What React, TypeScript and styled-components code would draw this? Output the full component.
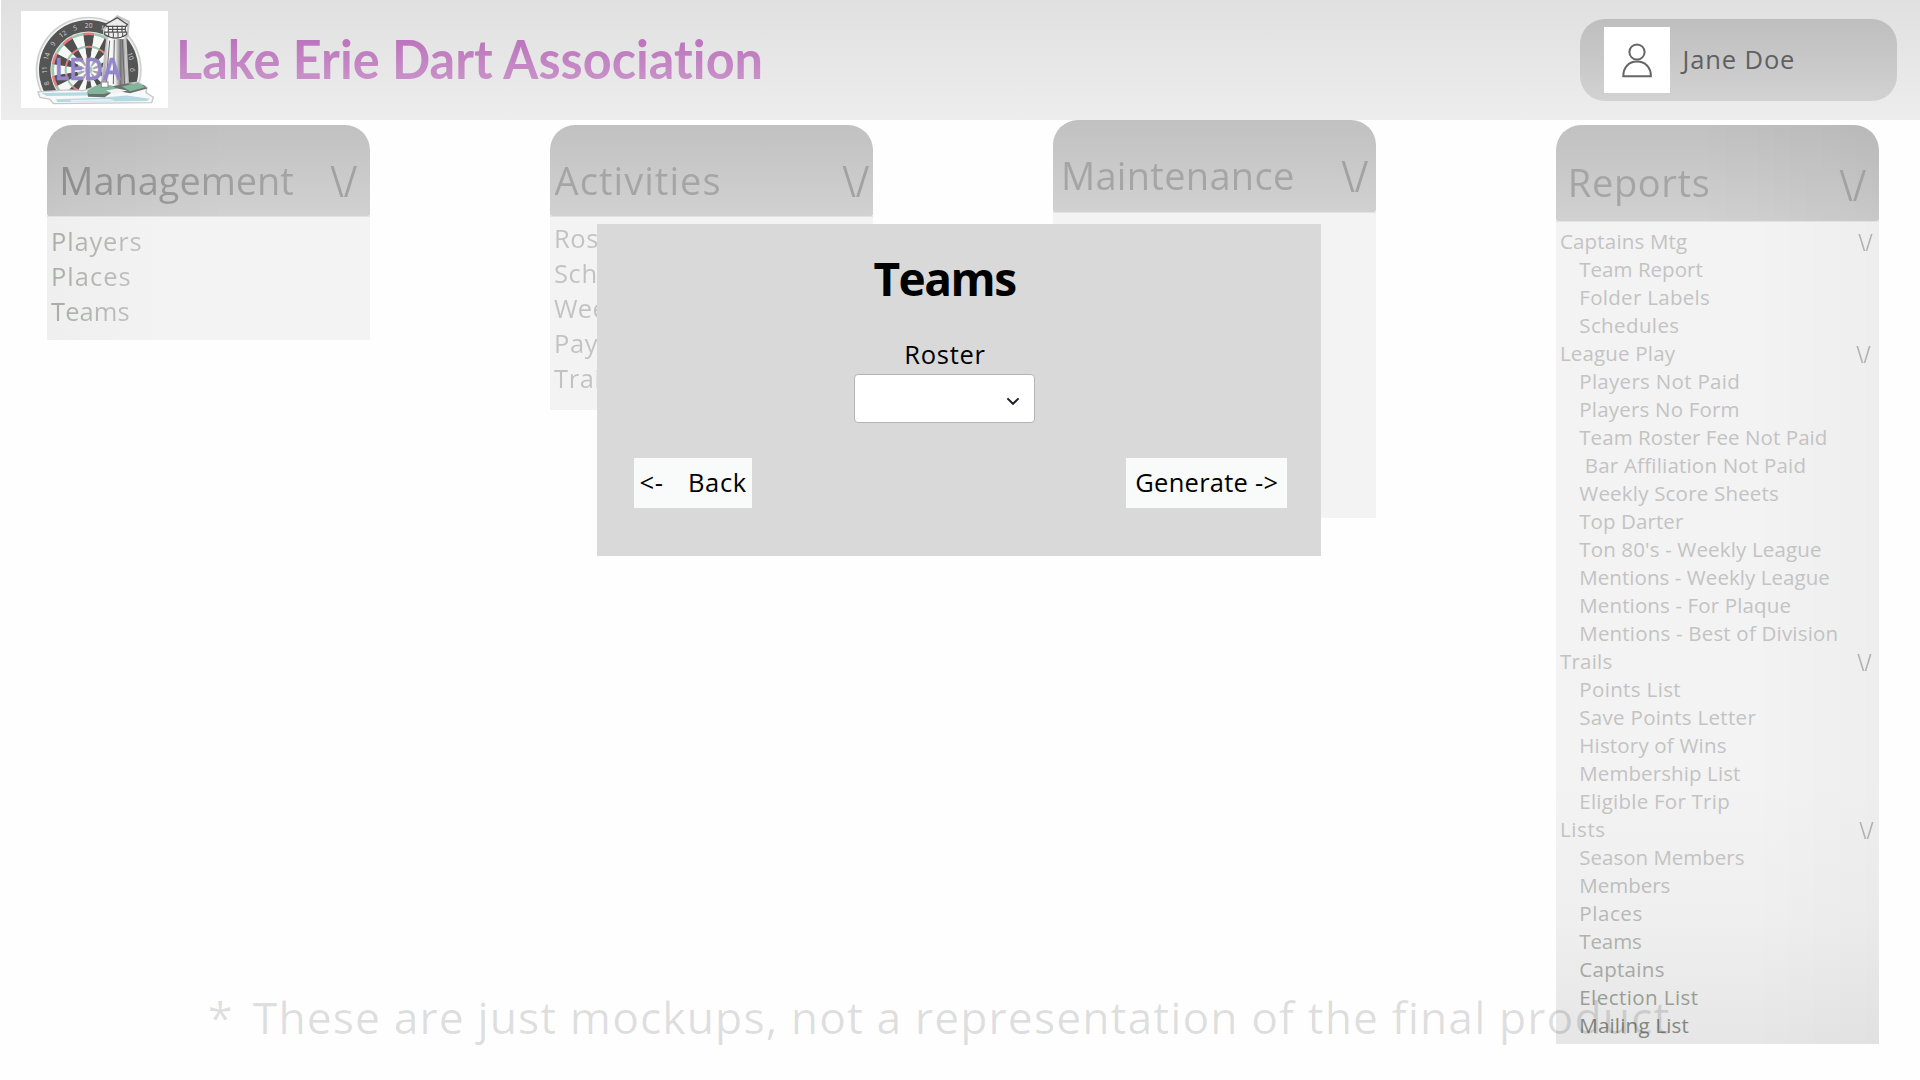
import React from "react";
import styled, { createGlobalStyle } from "styled-components";

const Global = createGlobalStyle`
  *, *::before, *::after { box-sizing: border-box; }
  body {
    margin: 0;
    background: #fff;
    font-family: "Open Sans", "Noto Sans", sans-serif;
    font-variant-ligatures: none;
  }
`;

const Page = styled.div`
  position: relative;
  width: 1920px;
  height: 1080px;
  overflow: hidden;
  background: #fefefe;
`;

const TopBar = styled.header`
  display: flex;
  align-items: flex-start;
  height: 120px;
  margin-left: 1px;
  padding: 11px 23px 0 20px;
  background: linear-gradient(#e0e0e0, #ededed);
`;

const LogoSvg = styled.svg`
  display: block;
  width: 147px;
  height: 97px;
  flex: none;
`;

const Brand = styled.h1`
  margin: 0 auto 0 7.6px;
  padding-top: 14px;
  font: 700 54px/68px Lato, sans-serif;
  font-variant-ligatures: none;
  white-space: nowrap;
  background: linear-gradient(#bc74bc 35%, #c890c8 82%);
  background-clip: text;
  color: transparent;
  transform: scaleX(0.934);
  transform-origin: left;
`;

const UserPill = styled.div`
  display: flex;
  align-items: center;
  gap: 12.5px;
  flex: none;
  width: 317px;
  height: 82px;
  margin-top: 8px;
  padding-left: 24px;
  border-radius: 25px;
  background: linear-gradient(#bebebe, #d2d2d2);
`;

const Avatar = styled.div`
  width: 66px;
  height: 66px;
  background: #fff;
`;

const UserName = styled.span`
  padding-bottom: 3px;
  color: #606060;
  font-size: 25.5px;
  letter-spacing: 0.88px;
`;

const Columns = styled.main`
  display: grid;
  grid-template-columns: repeat(4, 323.4px);
  column-gap: 179.6px;
  align-items: start;
  padding-left: 47px;
`;

const Panel = styled.section<{ $top?: number }>`
  margin-top: ${(p) => p.$top ?? 5}px;
`;

const PanelHead = styled.div<{ $h?: number; $l: number; $r: number; $edge?: "left" | "right" }>`
  display: flex;
  justify-content: space-between;
  height: ${(p) => p.$h ?? 91}px;
  padding: 0 ${(p) => p.$r}px 0 ${(p) => p.$l}px;
  border-radius: 25px 25px 2px 2px;
  white-space: nowrap;
  background: ${(p) =>
      p.$edge ? `linear-gradient(to ${p.$edge}, transparent 45%, rgba(0, 0, 0, 0.045)),` : ""}
    linear-gradient(#c1c1c1, #d1d1d1);
`;

const HeadTitle = styled.h2<{ $ls: number; $lh: number; $from?: string }>`
  margin: 0;
  font-size: 38px;
  font-weight: 400;
  line-height: ${(p) => p.$lh}px;
  letter-spacing: ${(p) => p.$ls}px;
  background: linear-gradient(to right, ${(p) => p.$from ?? "#a5a5a5"}, #a5a5a5);
  background-clip: text;
  color: transparent;
`;

const HeadMark = styled.span<{ $lh: number }>`
  font-size: 44px;
  line-height: ${(p) => p.$lh}px;
  color: #a2a2a2;
  transform: scaleX(0.84);
  transform-origin: right;
`;

const PanelBody = styled.div<{ $h: number; $pad: number; $edge?: boolean; $deep?: boolean }>`
  height: ${(p) => p.$h}px;
  padding: ${(p) => p.$pad}px 0 0 4px;
  border-top: 1px solid #e2e2e2;
  background: ${(p) =>
    p.$deep
      ? "linear-gradient(to right, transparent 60%, rgba(0,0,0,.018)), linear-gradient(#f3f3f3 68%, #efefef 85%, #e6e6e6)"
      : p.$edge
        ? "linear-gradient(to right, #efefef, #f3f3f3 35%)"
        : "#f3f3f3"};
`;

const Item = styled.div<{ $ls?: number; $faded?: boolean }>`
  width: max-content;
  height: 35px;
  line-height: 35px;
  font-size: 25.5px;
  letter-spacing: ${(p) => p.$ls ?? 0.6}px;
  background: ${(p) => (p.$faded ? "#c2c2c2" : "linear-gradient(to right, #a9ada6, #c0c0c0)")};
  background-clip: text;
  color: transparent;
`;

const Row = styled.div<{ $indent: boolean; $c: string; $ls: number; $r: number }>`
  display: flex;
  justify-content: space-between;
  height: 28px;
  padding-left: ${(p) => (p.$indent ? 19.3 : 0)}px;
  padding-right: ${(p) => p.$r}px;
  font-size: 20.5px;
  line-height: 28px;
  letter-spacing: ${(p) => p.$ls}px;
  white-space: pre;
  color: ${(p) => p.$c};
`;

const RowMark = styled.span`
  font-size: 24px;
  line-height: 29px;
  letter-spacing: 0;
  color: #b0b0b0;
  transform: scaleX(0.82);
  transform-origin: right;
`;

const Modal = styled.div`
  position: absolute;
  left: 597px;
  top: 224px;
  width: 724px;
  height: 332px;
  background: #d9d9d9;
  color: #000;
`;

const Form = styled.div`
  display: flex;
  flex-direction: column;
  align-items: center;
  width: 695px;
`;

const ModalTitle = styled.h2`
  margin: 0;
  font-size: 46px;
  line-height: 109px;
  letter-spacing: -1.5px;
`;

const Label = styled.label`
  margin: 4px 0 2px;
  padding-left: 1px;
  font-size: 25.5px;
  line-height: 35px;
  letter-spacing: 0.7px;
`;

const Select = styled.button`
  display: flex;
  justify-content: flex-end;
  align-items: center;
  width: 181px;
  height: 49px;
  padding: 6px 14px 0 0;
  border: 1px solid #b4b4b4;
  border-radius: 4px;
  background: #fff;
`;

const Actions = styled.div`
  display: flex;
  justify-content: space-between;
  margin-top: 35px;
  padding: 0 34px 0 37px;
`;

const ActionButton = styled.button<{ $w: number; $l: number; $ls: number }>`
  display: flex;
  width: ${(p) => p.$w}px;
  height: 50px;
  padding: 0 0 0 ${(p) => p.$l}px;
  border: 0;
  background: #f9fbfa;
  color: #000;
  font: 400 25.5px/48px "Open Sans", sans-serif;
  letter-spacing: ${(p) => p.$ls}px;
  white-space: nowrap;
`;

const Arrow = styled.span`
  width: 48.5px;
  text-align: left;
`;

const Note = styled.p`
  position: absolute;
  left: 208px;
  top: 986px;
  margin: 0;
  font-size: 44.5px;
  line-height: 61px;
  letter-spacing: 1.06px;
  white-space: pre;
  color: rgba(0, 0, 0, 0.13);
`;

const Star = styled.span`
  margin-right: -6px;
`;

const CX = 266;
const CY = 210;

function wedge(i: number, r0: number, r1: number) {
  const a0 = ((i * 18 - 9) * Math.PI) / 180;
  const a1 = ((i * 18 + 9) * Math.PI) / 180;
  const p = (r: number, a: number) => `${(CX + r * Math.sin(a)).toFixed(1)} ${(CY - r * Math.cos(a)).toFixed(1)}`;
  return `M${p(r0, a0)}L${p(r1, a0)}A${r1} ${r1} 0 0 1 ${p(r1, a1)}L${p(r0, a1)}A${r0} ${r0} 0 0 0 ${p(r0, a0)}Z`;
}

const numbers: [string, number][] = [
  ["8", -108], ["11", -90], ["14", -72], ["9", -54], ["12", -36], ["5", -18], ["20", 0], ["1", 18], ["10", 72], ["6", 90],
];

function Logo() {
  const sectors = Array.from({ length: 20 }, (_, i) => i);
  return (
    <LogoSvg viewBox="63 34 441 290" preserveAspectRatio="none">
      <defs>
        <clipPath id="board">
          <rect x="63" y="34" width="441" height="239" />
        </clipPath>
        <linearGradient id="tower">
          <stop offset="0" stopColor="#888" />
          <stop offset=".3" stopColor="#fff" />
          <stop offset=".55" stopColor="#e8e8e8" />
          <stop offset=".75" stopColor="#777" />
          <stop offset="1" stopColor="#ccc" />
        </linearGradient>
      </defs>
      <rect x="63" y="34" width="441" height="290" fill="#fff" />
      <g clipPath="url(#board)">
        <circle cx={CX} cy={CY} r="159" fill="#cfcfcf" />
        <circle cx={CX} cy={CY} r="154" fill="#f4f4f4" />
        <circle cx={CX} cy={CY} r="149" fill="#555" />
        <circle cx={CX} cy={CY} r="115" fill="#e4e4e4" />
        {sectors.map((i) => (
          <g key={i}>
            <path d={wedge(i, 34, 107)} fill={i % 2 ? "#f6f8f6" : "#505050"} />
            <path d={wedge(i, 14, 34)} fill={i % 2 ? "#fafafa" : "#a8a8a8"} />
            <path d={wedge(i, 104, 112)} fill={i % 2 ? "#9cc8af" : "#e47c7e"} />
            <path d={wedge(i, 66, 72)} fill={i % 2 ? "#9cc8af" : "#e47c7e"} />
          </g>
        ))}
        <circle cx={CX} cy={CY} r="11" fill="#a9cbb8" />
        {numbers.map(([n, a]) => (
          <text
            key={n}
            x={CX}
            y={CY - 125}
            transform={`rotate(${a} ${CX} ${CY})`}
            textAnchor="middle"
            fontSize="20"
            fontFamily="Open Sans"
            fill="#d4d4d4"
          >
            {n}
          </text>
        ))}
      </g>
      <path d="M114 276L206 270L250 272L300 256L330 258L414 247L441 262L438 278L460 292L455 308L160 311L150 298L120 292Z" fill="#f6f8f9" stroke="#c8c8c8" strokeWidth="4" />
      <path d="M124 279L262 277L264 287L140 288Z" fill="#b4d9e2" />
      <path d="M168 298L300 293L380 287L450 296L440 303L172 306Z" fill="#b4d9e2" />
      <path d="M210 300L330 297L345 302L215 305Z" fill="#e2f1f4" />
      <path d="M312 88L352 50L386 66L382 108L376 116L384 262L304 262L322 116L313 106Z" fill="#fafafa" stroke="#c4c4c4" strokeWidth="7" />
      <path d="M322 118H373L380 256H306Z" fill="url(#tower)" />
      <path d="M329 122L318 254M343 120L340 252M367 120L374 254" stroke="#666" strokeWidth="3" fill="none" />
      <path d="M316 74L352 54L382 74L378 80H320Z" fill="#ececec" stroke="#505050" strokeWidth="4" />
      <path d="M325 80V100M338 78V100M352 78V100M366 78V100M376 80V100M325 89H376" stroke="#505050" strokeWidth="3.5" />
      <path d="M314 97H380V104Q347 126 314 104Z" fill="#eee" stroke="#505050" strokeWidth="3.5" />
      <path d="M326 98V112M340 98V115M354 98V115M368 98V112" stroke="#505050" strokeWidth="3" />
      <path d="M262 276L298 254L340 258L384 250L432 256L442 266L390 280L344 272L314 292L264 290Z" fill="#6b706e" />
      <path d="M262 272L298 252L338 258L356 270L312 282L266 282Z" fill="#82b59a" />
      <path d="M366 260L414 248L436 262L390 274Z" fill="#82b59a" />
      <path d="M318 272L352 266L382 272L340 282Z" fill="#eef3f0" />
      <path d="M304 246H324V262H304Z" fill="#fff" stroke="#888" strokeWidth="3" />
      <text
        x="164"
        y="240"
        fontFamily="Open Sans"
        fontWeight="600"
        fontSize="90"
        textLength="198"
        lengthAdjust="spacingAndGlyphs"
        fill="#9486cb"
        stroke="#9486cb"
        strokeWidth="2"
      >
        LEDA
      </text>
    </LogoSvg>
  );
}

type Entry = { t: string; ls: number; head?: number; c?: string };

const reports: Entry[] = [
  { t: "Captains Mtg", ls: 0.18, head: 6.5 },
  { t: "Team Report", ls: 0.03 },
  { t: "Folder Labels", ls: 0.3 },
  { t: "Schedules", ls: 0.39 },
  { t: "League Play", ls: 0.17, head: 9 },
  { t: "Players Not Paid", ls: 0.3 },
  { t: "Players No Form", ls: 0.2 },
  { t: "Team Roster Fee Not Paid", ls: 0.07 },
  { t: " Bar Affiliation Not Paid", ls: 0.2 },
  { t: "Weekly Score Sheets", ls: 0.2 },
  { t: "Top Darter", ls: 0.08 },
  { t: "Ton 80's - Weekly League", ls: 0.15 },
  { t: "Mentions - Weekly League", ls: 0.06 },
  { t: "Mentions - For Plaque", ls: 0.13 },
  { t: "Mentions - Best of Division", ls: 0.19 },
  { t: "Trails", ls: 0.22, head: 8 },
  { t: "Points List", ls: 0.36 },
  { t: "Save Points Letter", ls: 0.31 },
  { t: "History of Wins", ls: 0.18 },
  { t: "Membership List", ls: 0.1 },
  { t: "Eligible For Trip", ls: 0.24 },
  { t: "Lists", ls: 0.6, head: 6 },
  { t: "Season Members", ls: 0 },
  { t: "Members", ls: 0, c: "#bebfbe" },
  { t: "Places", ls: 0.6, c: "#b8b9b7" },
  { t: "Teams", ls: -0.1, c: "#b0b2ae" },
  { t: "Captains", ls: 0.3, c: "#a6a9a4" },
  { t: "Election List", ls: 0.44, c: "#999d95" },
  { t: "Mailing List", ls: 0.2, c: "#838780" },
];

export default function App() {
  return (
    <Page>
      <Global />
      <TopBar>
        <Logo />
        <Brand>Lake Erie Dart Association</Brand>
        <UserPill>
          <Avatar>
            <svg width="66" height="66" viewBox="0 0 66 66" fill="none" stroke="#666" strokeWidth="2">
              <circle cx="33" cy="25" r="7.6" />
              <path d="M19.3 49.2C19.3 40 25 34.6 33 34.6S46.9 40 46.9 49.2Z" />
            </svg>
          </Avatar>
          <UserName>Jane Doe</UserName>
        </UserPill>
      </TopBar>
      <Columns>
        <Panel>
          <PanelHead $l={12.3} $r={13} $edge="left">
            <HeadTitle $ls={-0.05} $lh={110} $from="#8e8e8e">Management</HeadTitle>
            <HeadMark $lh={111}>\/</HeadMark>
          </PanelHead>
          <PanelBody $h={124} $pad={7} $edge>
            <Item $ls={0.85}>Players</Item>
            <Item $ls={1}>Places</Item>
            <Item $ls={0.1}>Teams</Item>
          </PanelBody>
        </Panel>
        <Panel>
          <PanelHead $l={4.6} $r={4.6}>
            <HeadTitle $ls={1.05} $lh={110}>Activities</HeadTitle>
            <HeadMark $lh={111}>\/</HeadMark>
          </PanelHead>
          <PanelBody $h={194} $pad={4}>
            <Item $faded>Rosters</Item>
            <Item $faded>Schedules</Item>
            <Item $faded $ls={0.3}>Weekly</Item>
            <Item $faded>Payments</Item>
            <Item $faded>Trails</Item>
          </PanelBody>
        </Panel>
        <Panel $top={0}>
          <PanelHead $h={92} $l={8} $r={8}>
            <HeadTitle $ls={0.3} $lh={110}>Maintenance</HeadTitle>
            <HeadMark $lh={111}>\/</HeadMark>
          </PanelHead>
          <PanelBody $h={306} $pad={0} />
        </Panel>
        <Panel>
          <PanelHead $h={96} $l={11.9} $r={13} $edge="right">
            <HeadTitle $ls={0.65} $lh={115}>Reports</HeadTitle>
            <HeadMark $lh={118}>\/</HeadMark>
          </PanelHead>
          <PanelBody $h={823} $pad={5.4} $deep>
            {reports.map((r) => (
              <Row key={r.t} $indent={!r.head} $c={r.c ?? "#c3c3c3"} $ls={r.ls} $r={r.head ?? 0}>
                {r.t}
                {r.head && <RowMark>\/</RowMark>}
              </Row>
            ))}
          </PanelBody>
        </Panel>
      </Columns>
      <Modal>
        <Form>
          <ModalTitle>Teams</ModalTitle>
          <Label>Roster</Label>
          <Select aria-label="Roster">
            <svg width="14" height="9" viewBox="0 0 14 9" fill="none" stroke="#1c2024" strokeWidth="2">
              <path d="M1.4 1.4L7 6.8L12.6 1.4" />
            </svg>
          </Select>
        </Form>
        <Actions>
          <ActionButton $w={118} $l={5.5} $ls={0.65}>
            <Arrow>&lt;-</Arrow>Back
          </ActionButton>
          <ActionButton $w={161} $l={9.3} $ls={0.26}>Generate -&gt;</ActionButton>
        </Actions>
      </Modal>
      <Note>
        <Star>*  </Star>These are just mockups, not a representation of the final product
      </Note>
    </Page>
  );
}
